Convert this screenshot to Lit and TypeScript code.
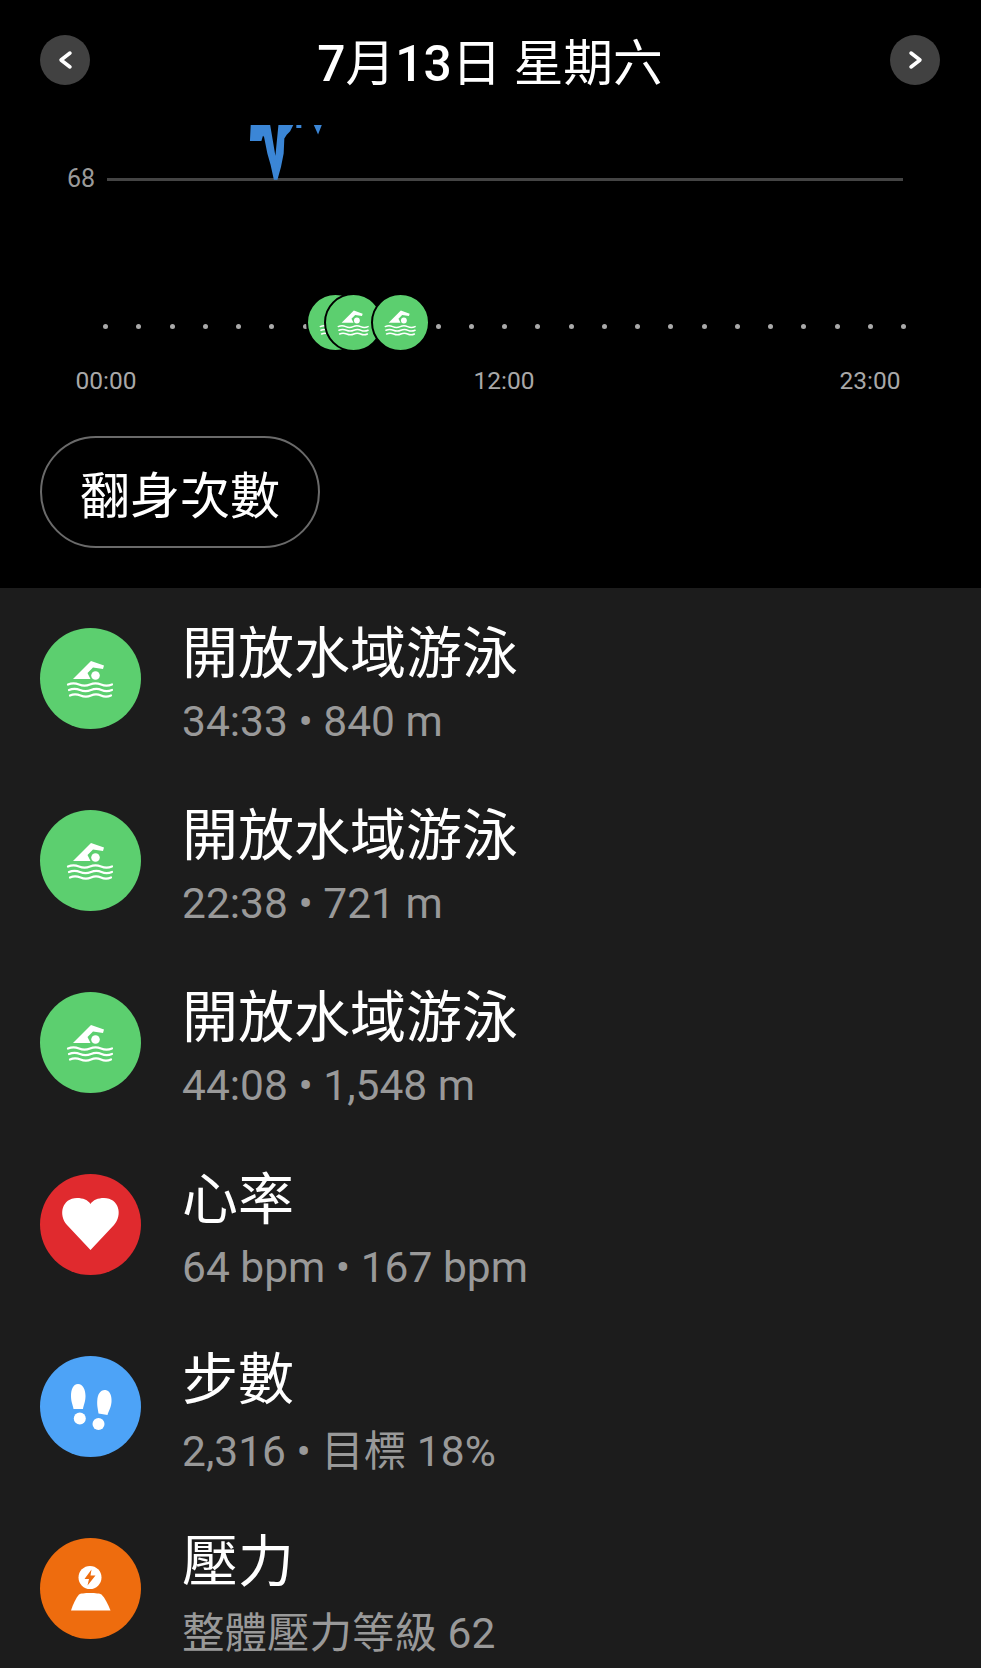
import { LitElement, html, svg, css } from 'lit';
import { customElement } from 'lit/decorators.js';

const swim = svg`
  <path d="M33 51 L51 33 L64 37.500 L63 41 L53 39.500 L47.500 45 L50.500 51 Z" fill="#fff"/>
  <circle cx="55.500" cy="47.500" r="4.300" fill="#fff"/>
  <g fill="none" stroke="#fff" stroke-width="2.200" stroke-linecap="round">
    <path d="M28 56.500 q5.500 -2.400 11 0 t11 0 t11 0 t11 0"/>
    <path d="M29 62 q5.500 -2.400 11 0 t11 0 t10.500 0 t10.500 0"/>
    <path d="M30 67.500 q5 -2.400 10.500 0 t10.500 0 t10 0 t10 0"/>
  </g>
`;

const heart = svg`
  <path d="M50.500 76 L27 51 C18 41 22 24 37 24 C43 24 48 26 50.500 30 C53 26 58 24 64 24 C79 24 83 41 74 51 Z" fill="#fff"/>
`;

const steps = svg`
  <g fill="#fff">
    <path d="M38 28 C43 28 45.500 34 45.500 40 C45.500 46 43.500 49 43 53 L33.500 53 C33 49 31 46 31 40 C31 34 33 28 38 28 Z"/>
    <circle cx="39.800" cy="62.500" r="6"/>
    <path d="M65.500 34 C70 34.500 72 40 71.500 46 C71 52 68.500 55 67.500 59 L58.500 57.500 C58 53 56.800 50 57.300 44 C57.800 38 60.500 33.500 65.500 34 Z"/>
    <circle cx="58.500" cy="68" r="6"/>
  </g>
`;

const stress = svg`
  <circle cx="50" cy="39.500" r="11.500" fill="#fff"/>
  <path d="M51.500 31.500 L44.500 41 L49 41 L47.500 47.500 L55.500 37.500 L50.500 37.500 Z" fill="#ee6c0e"/>
  <path d="M31 72.500 C33 66 36 60 39 56.500 C41 54.500 59 54.500 61.500 56.500 C65 60 68 66 70.500 72.500 Z" fill="#fff"/>
`;

const rows = [
  { icon: swim, color: '#5ccf6f', title: '開放水域游泳', sub: '34:33 • 840 m' },
  { icon: swim, color: '#5ccf6f', title: '開放水域游泳', sub: '22:38 • 721 m' },
  { icon: swim, color: '#5ccf6f', title: '開放水域游泳', sub: '44:08 • 1,548 m' },
  { icon: heart, color: '#e02a2e', title: '心率', sub: '64 bpm • 167 bpm' },
  { icon: steps, color: '#4da3f7', title: '步數', sub: '2,316 • 目標 18%', cjk: true },
  { icon: stress, color: '#ee6c0e', title: '壓力', sub: '整體壓力等級 62', cjk: true },
];

const pins = [335.5, 353.5, 400.5];

@customElement('app-root')
export class AppRoot extends LitElement {
  static styles = css`
    :host {
      display: block;
      width: 981px;
      height: 1668px;
      overflow: hidden;
      background: #000;
      color: #fff;
      font-family: Roboto, "Noto Sans CJK TC", sans-serif;
    }
    .header {
      height: 120px;
      padding: 0 41px 0 40px;
      display: flex;
      align-items: center;
      justify-content: space-between;
    }
    .nav {
      width: 50px;
      height: 50px;
      border-radius: 50%;
      background: #414141;
      display: flex;
      align-items: center;
      justify-content: center;
    }
    .nav svg {
      width: 50px;
      height: 50px;
      fill: none;
      stroke: #fff;
      stroke-width: 3.5;
      stroke-linecap: round;
      stroke-linejoin: round;
    }
    .title {
      font-size: 49.7px;
      line-height: 60px;
      margin-top: 8px;
    }
    .title b {
      font-weight: 500;
    }
    .plot {
      position: relative;
      height: 240px;
    }
    .spike {
      position: absolute;
      left: 230px;
      top: -10px;
      width: 110px;
      height: 80px;
      fill: #3b86d6;
      stroke: #3b86d6;
      stroke-width: 6;
    }
    .level {
      position: absolute;
      left: 67px;
      top: 45px;
      font-size: 25px;
      line-height: 28px;
      color: #9a9a9a;
    }
    .line {
      position: absolute;
      left: 107px;
      width: 796px;
      top: 58px;
      height: 3px;
      background: #444;
    }
    .dots {
      position: absolute;
      left: 103px;
      width: 803px;
      top: 204px;
      display: flex;
      justify-content: space-between;
    }
    .dot {
      width: 5px;
      height: 5px;
      border-radius: 50%;
      background: #aaa;
    }
    .pin {
      position: absolute;
      top: 173px;
      width: 55px;
      height: 55px;
      margin-left: -29.5px;
      border: 2px solid #000;
      border-radius: 50%;
      background: #5ccf6f;
    }
    .pin svg {
      display: block;
      width: 55px;
      height: 55px;
    }
    .hours {
      height: 40px;
      padding-left: 75.5px;
      display: grid;
      grid-template-columns: 398px 366px auto;
      justify-content: start;
      align-items: center;
      font-size: 24.5px;
      color: #a8a8a8;
    }
    .chip-wrap {
      padding: 36px 40px 40px;
      display: flex;
    }
    .chip {
      box-sizing: border-box;
      width: 280px;
      height: 112px;
      border: 2px solid #6a6a6a;
      border-radius: 56px;
      display: flex;
      align-items: center;
      justify-content: center;
      font-size: 50px;
    }
    .list {
      background: #1c1c1c;
      height: 1080px;
    }
    .row {
      height: 182px;
      padding-left: 40px;
      display: flex;
      align-items: center;
      gap: 41px;
    }
    .badge {
      flex: none;
      width: 101px;
      height: 101px;
      margin-bottom: 2px;
      border-radius: 50%;
    }
    .badge svg {
      display: block;
      width: 101px;
      height: 101px;
    }
    .name {
      font-size: 56px;
      line-height: 68px;
      margin-top: 8px;
    }
    .sub {
      font-size: 42.5px;
      line-height: 50px;
      margin-top: 9px;
      color: #999;
    }
    .sub.cjk {
      margin-top: 13px;
    }
  `;

  render() {
    return html`
      <div class="header">
        <div class="nav"><svg viewBox="0 0 50 50"><path d="M30 18 L21 25 L30 32"/></svg></div>
        <div class="title"><b>7</b>月<b>13</b>日 星期六</div>
        <div class="nav"><svg viewBox="0 0 50 50"><path d="M21 18 L30 25 L21 32"/></svg></div>
      </div>
      <div class="plot">
        <div class="level">68</div>
        <div class="line"></div>
        <svg class="spike" viewBox="0 0 330 240">
          <path d="M65 48 L118 48 L137 160 L148 48 L185 48 L178 62 L168 72 L160 85 L158 130 L150 170 L140 206 L134 206 L125 165 L115 130 L105 80 L98 70 L92 90 L63 90 Z"/>
          <rect x="202" y="48" width="9" height="3"/>
          <path d="M256 48 L271 48 L264 66 Z"/>
        </svg>
        <div class="dots">${Array.from({ length: 25 }, () => html`<div class="dot"></div>`)}</div>
        ${pins.map(x => html`
          <div class="pin" style="left:${x}px"><svg viewBox="10 10 81 81">${swim}</svg></div>
        `)}
      </div>
      <div class="hours"><span>00:00</span><span>12:00</span><span>23:00</span></div>
      <div class="chip-wrap"><div class="chip">翻身次數</div></div>
      <div class="list">
        ${rows.map(r => html`
          <div class="row">
            <div class="badge" style="background:${r.color}"><svg viewBox="0 0 101 101">${r.icon}</svg></div>
            <div>
              <div class="name">${r.title}</div>
              <div class="sub ${r.cjk ? 'cjk' : ''}">${r.sub}</div>
            </div>
          </div>
        `)}
      </div>
    `;
  }
}
